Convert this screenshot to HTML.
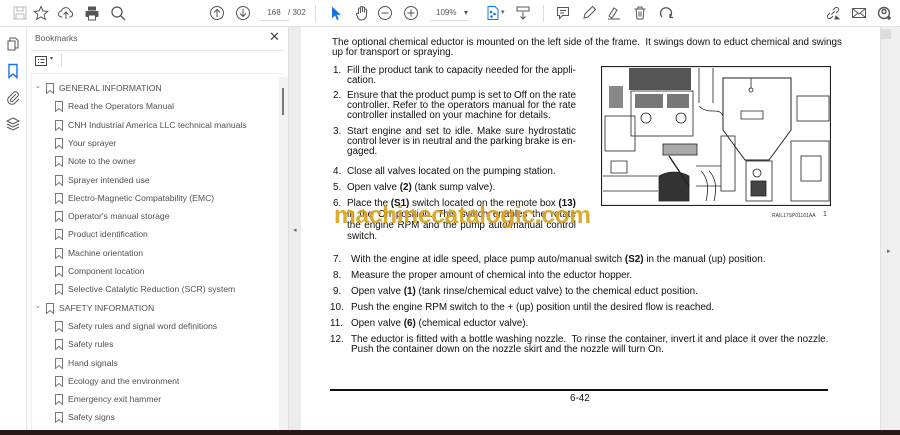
<!DOCTYPE html>
<html><head><meta charset="utf-8"><style>
*{margin:0;padding:0;box-sizing:border-box}
body{width:900px;height:435px;overflow:hidden;background:#fff;font-family:"Liberation Sans",Arial,sans-serif;position:relative}
.a{position:absolute}
.tb{left:0;top:0;width:900px;height:27px;background:#fff;border-bottom:1px solid #e2e2e2}
.ic{position:absolute;top:5px;width:16px;height:16px}
.rail{left:0;top:27px;width:27px;height:403px;background:#fff;border-right:1px solid #e6e6e6}
.panel{left:27px;top:27px;width:261px;height:403px;background:#fff}
.bm{position:absolute;font-size:8.6px;color:#505050;white-space:nowrap}
.gut{left:288px;top:27px;width:13px;height:403px;background:#ececec;border-left:1px solid #ddd}
.page{left:301px;top:27px;width:579px;height:403px;background:#fff}
.vs{left:880px;top:27px;width:20px;height:403px;background:#efefef;border-left:1px solid #e0e0e0}
.t{position:absolute;font-size:9.9px;color:#111;white-space:nowrap;line-height:10px}
.j{display:flex;justify-content:space-between;width:229px}
</style></head><body>
<div class="a tb">
<svg class="ic" style="left:12px" viewBox="0 0 16 16" fill="none" stroke="#bbb"><rect x="2" y="2" width="12" height="12"/><rect x="5" y="2" width="6" height="4"/><rect x="4" y="9" width="8" height="5"/></svg>
<svg class="ic" style="left:33px" viewBox="0 0 16 16" fill="none" stroke="#555"><path d="M8 1.5l2 4.5 4.8.4-3.7 3.2 1.1 4.7L8 11.8l-4.2 2.5 1.1-4.7L1.2 6.4 6 6z"/></svg>
<svg class="ic" style="left:58px" viewBox="0 0 16 16" fill="none" stroke="#555"><path d="M4.5 12H3.5a3 3 0 0 1 0-6 4.5 4.5 0 0 1 8.8 0.5 2.8 2.8 0 0 1 0 5.5h-1M8 14V7M5.5 9.5L8 7l2.5 2.5"/></svg>
<svg class="ic" style="left:84px" viewBox="0 0 16 16" fill="#555"><rect x="4" y="1.5" width="8" height="4"/><rect x="1.5" y="6" width="13" height="6" rx="1"/><rect x="4.5" y="10" width="7" height="5" fill="#fff" stroke="#555"/></svg>
<svg class="ic" style="left:110px" viewBox="0 0 16 16" fill="none" stroke="#555" stroke-width="1.3"><circle cx="7" cy="7" r="5"/><path d="M10.5 10.5L15 15"/></svg>
<svg class="ic" style="left:209px" viewBox="0 0 16 16" fill="none" stroke="#555"><circle cx="8" cy="8" r="6.5"/><path d="M8 12V4.5M5 7.5l3-3 3 3"/></svg>
<svg class="ic" style="left:235px" viewBox="0 0 16 16" fill="none" stroke="#555"><circle cx="8" cy="8" r="6.5"/><path d="M8 4v7.5M5 8.5l3 3 3-3"/></svg>
<div class="a" style="left:259px;top:5px;width:30px;height:16px;font-size:8px;color:#555;text-align:center;line-height:16px;border-bottom:1px solid #ddd">168</div>
<div class="a" style="left:288px;top:5px;font-size:8px;color:#555;line-height:16px">/ 302</div>
<div class="a" style="left:315px;top:5px;width:1px;height:17px;background:#ddd"></div>
<svg class="ic" style="left:328px" viewBox="0 0 16 16"><path d="M4 1.5v12l3-3 2 4.5 1.8-.8-2-4.3h4z" fill="#1473e6"/></svg>
<svg class="ic" style="left:354px" viewBox="0 0 16 16" fill="none" stroke="#555"><path d="M4.5 9V4a1 1 0 0 1 2 0v4M6.5 7V2.5a1 1 0 0 1 2 0V7M8.5 7V3a1 1 0 0 1 2 0v4.5M10.5 7.5V5a1 1 0 0 1 2 0v5a5 5 0 0 1-5 5 4 4 0 0 1-3.5-2L2.5 9.5a1 1 0 0 1 2-.5"/></svg>
<svg class="ic" style="left:377px" viewBox="0 0 16 16" fill="none" stroke="#555"><circle cx="8" cy="8" r="6.5"/><path d="M4.5 8h7"/></svg>
<svg class="ic" style="left:403px" viewBox="0 0 16 16" fill="none" stroke="#555"><circle cx="8" cy="8" r="6.5"/><path d="M4.5 8h7M8 4.5v7"/></svg>
<div class="a" style="left:430px;top:5px;width:40px;height:16px;font-size:8px;color:#555;line-height:16px;padding-left:6px;border-bottom:1px solid #ddd">109%</div>
<div class="a" style="left:464px;top:5px;font-size:8px;color:#555;line-height:16px">▾</div>
<svg class="ic" style="left:485px" viewBox="0 0 16 16" fill="none" stroke="#1473e6"><path d="M3 1.5h7l3 3v10H3z"/><circle cx="6" cy="7" r=".8" fill="#1473e6"/><circle cx="9.5" cy="9" r=".8" fill="#1473e6"/><circle cx="6.5" cy="11.5" r=".8" fill="#1473e6"/></svg>
<div class="a" style="left:501px;top:5px;font-size:7px;color:#555;line-height:16px">▾</div>
<svg class="ic" style="left:515px" viewBox="0 0 16 16" fill="none" stroke="#555"><rect x="2" y="2" width="12" height="4"/><path d="M8 7v7M5.5 11.5L8 14l2.5-2.5"/></svg>
<div class="a" style="left:543px;top:5px;width:1px;height:17px;background:#ddd"></div>
<svg class="ic" style="left:555px" viewBox="0 0 16 16" fill="none" stroke="#555"><path d="M2.5 2.5h11v8h-6l-3 3v-3h-2z"/><path d="M5 5.5h6M5 8h4"/></svg>
<svg class="ic" style="left:581px" viewBox="0 0 16 16" fill="none" stroke="#555"><path d="M3 13l1-4 7.5-7.5 3 3L7 12z"/></svg>
<svg class="ic" style="left:606px" viewBox="0 0 16 16" fill="none" stroke="#555"><path d="M3 11l5-8 3 2-5 8zM2 14h12"/></svg>
<svg class="ic" style="left:632px" viewBox="0 0 16 16" fill="none" stroke="#555"><path d="M2.5 4h11M6 4V2h4v2M4 4l1 10h6l1-10M7 6.5v5M9 6.5v5"/></svg>
<svg class="ic" style="left:658px" viewBox="0 0 16 16" fill="none" stroke="#555" stroke-width="1.3"><path d="M4 12a5.5 5.5 0 1 1 8 0M12 9v3.5h3"/></svg>
<svg class="ic" style="left:825px" viewBox="0 0 16 16" fill="none" stroke="#555"><path d="M6.5 9.5l3-3M5 8l-2 2a2 2 0 0 0 3 3l2-2M11 8l2-2a2 2 0 0 0-3-3L8 5"/><path d="M11 11l3 3h-4z" fill="#555"/></svg>
<svg class="ic" style="left:851px" viewBox="0 0 16 16" fill="none" stroke="#555"><rect x="1.5" y="3.5" width="13" height="9"/><path d="M1.5 3.5L8 9l6.5-5.5M1.5 12.5l5-4M14.5 12.5l-5-4"/></svg>
<svg class="ic" style="left:877px" viewBox="0 0 16 16" fill="none" stroke="#555" stroke-width="1.4"><circle cx="7" cy="8" r="5.5"/><circle cx="7" cy="6.5" r="2"/><path d="M12 11v4M10 13h4"/></svg>
</div>
<div class="a rail">
<svg class="a" style="left:5px;top:9px" width="16" height="16" viewBox="0 0 16 16" fill="none" stroke="#555"><path d="M5 4.5V2h5.5L13 4.5V12H10"/><rect x="3" y="5" width="7" height="9"/></svg>
<svg class="a" style="left:5px;top:36px" width="16" height="16" viewBox="0 0 16 16" fill="none" stroke="#1473e6" stroke-width="1.4"><path d="M4 1.5h8v13L8 11l-4 3.5z"/></svg>
<svg class="a" style="left:5px;top:62px" width="16" height="16" viewBox="0 0 16 16" fill="none" stroke="#555"><path d="M11 5l-5.5 5.5a1.5 1.5 0 0 0 2 2L13 7a3 3 0 0 0-4-4L3.5 8.5a4.3 4.3 0 0 0 6 6L14 10"/></svg>
<svg class="a" style="left:5px;top:89px" width="16" height="16" viewBox="0 0 16 16" fill="none" stroke="#555"><path d="M8 2l6 3-6 3-6-3zM2 8l6 3 6-3M2 11l6 3 6-3"/></svg>
</div>
<div class="a panel">
<div class="a" style="left:8px;top:6px;font-size:8.5px;color:#555">Bookmarks</div>
<div class="a" style="left:242px;top:2px;font-size:13px;color:#444">✕</div>
<div class="a" style="left:4px;top:23px;width:253px;height:1px;background:#e6e6e6"></div>
<svg class="a" style="left:8px;top:29px" width="12" height="10" viewBox="0 0 12 10" fill="none" stroke="#444"><rect x=".5" y=".5" width="11" height="9"/><path d="M3 3.5h1M5.5 3.5h4M3 6.5h1M5.5 6.5h4"/></svg>
<div class="a" style="left:23px;top:28px;font-size:6px;color:#555">▾</div>
<div class="a" style="left:34px;top:26px;width:1px;height:14px;background:#ddd"></div>
<div class="a" style="left:4px;top:46px;width:253px;height:1px;background:#eee"></div>
<div class="a" style="left:252px;top:50px;width:9px;height:353px;background:#f2f2f2"></div>
<div class="a" style="left:255px;top:61px;width:2px;height:27px;background:#777"></div>
<div class="a" style="left:4px;top:46px;width:1px;height:357px;background:#eee"></div>
</div>
<div id="bms"></div>
<div class="a gut"><div class="a" style="left:4px;top:199px;font-size:7px;color:#666">◂</div></div>
<div class="a page"></div>
<div class="a vs"><div class="a" style="left:0;top:2px;width:10px;height:10px;background:#ddd"></div><div class="a" style="left:6px;top:220px;font-size:7px;color:#666">▸</div></div>
<div class="a" style="left:0;top:430px;width:900px;height:5px;background:#2a1818"></div>

<div class="t" style="left:332px;top:38px">The optional chemical eductor is mounted on the left side of the frame.&nbsp; It swings down to educt chemical and swings</div>
<div class="t" style="left:332px;top:48px">up for transport or spraying.</div>

<div class="t" style="left:333px;top:66px">1.</div><div class="t j" style="left:347px;top:66px">Fill the product tank to capacity needed for the appli-</div>
<div class="t" style="left:347px;top:76px">cation.</div>
<div class="t" style="left:333px;top:91px">2.</div><div class="t j" style="left:347px;top:91px">Ensure that the product pump is set to Off on the rate</div>
<div class="t j" style="left:347px;top:101px">controller. Refer to the operators manual for the rate</div>
<div class="t" style="left:347px;top:111px">controller installed on your machine for details.</div>
<div class="t" style="left:333px;top:127px">3.</div><div class="t j" style="left:347px;top:127px">Start engine and set to idle. Make sure hydrostatic</div>
<div class="t j" style="left:347px;top:137px">control lever is in neutral and the parking brake is en-</div>
<div class="t" style="left:347px;top:147px">gaged.</div>
<div class="t" style="left:333px;top:167px">4.</div><div class="t" style="left:347px;top:167px">Close all valves located on the pumping station.</div>
<div class="t" style="left:333px;top:183px">5.</div><div class="t" style="left:347px;top:183px">Open valve <b>(2)</b> (tank sump valve).</div>
<div class="t" style="left:333px;top:199px">6.</div><div class="t j" style="left:347px;top:199px">Place the <b>(S1)</b> switch located on the remote box <b>(13)</b></div>
<div class="t j" style="left:347px;top:210px">in the On position. This switch enables the rotate</div>
<div class="t j" style="left:347px;top:221px">the engine RPM and the pump auto/manual control</div>
<div class="t" style="left:347px;top:232px">switch.</div>
<div class="a" style="left:334px;top:202px;font-size:24.5px;font-weight:bold;color:#d9a21a;opacity:.9;white-space:nowrap;letter-spacing:-0.3px">machinecatalogic.com</div>

<div class="t" style="left:333px;top:255px">7.</div><div class="t" style="left:351px;top:255px">With the engine at idle speed, place pump auto/manual switch <b>(S2)</b> in the manual (up) position.</div>
<div class="t" style="left:333px;top:271px">8.</div><div class="t" style="left:351px;top:271px">Measure the proper amount of chemical into the eductor hopper.</div>
<div class="t" style="left:333px;top:287px">9.</div><div class="t" style="left:351px;top:287px">Open valve <b>(1)</b> (tank rinse/chemical educt valve) to the chemical educt position.</div>
<div class="t" style="left:330px;top:303px">10.</div><div class="t" style="left:351px;top:303px">Push the engine RPM switch to the + (up) position until the desired flow is reached.</div>
<div class="t" style="left:330px;top:319px">11.</div><div class="t" style="left:351px;top:319px">Open valve <b>(6)</b> (chemical eductor valve).</div>
<div class="t" style="left:330px;top:335px">12.</div><div class="t" style="left:351px;top:335px">The eductor is fitted with a bottle washing nozzle.&nbsp; To rinse the container, invert it and place it over the nozzle.</div>
<div class="t" style="left:351px;top:345px">Push the container down on the nozzle skirt and the nozzle will turn On.</div>

<div class="a" style="left:330px;top:389px;width:498px;height:2px;background:#111"></div>
<div class="t" style="left:570px;top:394px">6-42</div>

<svg class="a" style="left:601px;top:66px" width="230" height="140" viewBox="0 0 230 140" fill="none" stroke="#222" stroke-width="0.8">
<rect x=".5" y=".5" width="229" height="139" stroke-width="1.2"/>
<rect x="28" y="2" width="62" height="22" fill="#555" stroke="none"/>
<rect x="30" y="25" width="62" height="45"/>
<rect x="34" y="28" width="28" height="14" fill="#777" stroke="none"/>
<rect x="66" y="28" width="22" height="14" fill="#777" stroke="none"/>
<circle cx="45" cy="52" r="5"/><circle cx="80" cy="52" r="5"/>
<rect x="62" y="78" width="34" height="11" fill="#aaa"/>
<rect x="8" y="20" width="14" height="22" fill="#888" stroke="none"/>
<rect x="4" y="50" width="30" height="35"/>
<path d="M122 12h68v52l-22 30h-24l-22-30z" stroke-width="1"/>
<path d="M150 12v10"/><circle cx="150" cy="24" r="2"/>
<path d="M140 45h22v8h-22z"/>
<rect x="145" y="95" width="26" height="40"/>
<circle cx="156" cy="107" r="4"/>
<rect x="150" y="115" width="15" height="15" fill="#444"/>
<rect x="120" y="70" width="14" height="55"/>
<rect x="196" y="30" width="32" height="25"/>
<rect x="190" y="75" width="38" height="60"/>
<rect x="200" y="90" width="20" height="25"/>
<path d="M98 2v35M112 2v35M98 40c10 10 20 0 24 10"/>
<path d="M58 110q15-8 30 0v25h-30z" fill="#333"/>
<path d="M2 110h55M2 125h55M95 100h25M95 120h25M10 95h16v12H10z"/>
<path d="M68 90l20 30" stroke-width="1.4"/>
<path d="M100 105q10 10 5 30M108 105q10 10 5 30"/>
</svg>
<div class="a" style="left:772px;top:213px;font-size:5px;color:#333">RAIL17SP01161AA</div>
<div class="a" style="left:823px;top:211px;font-size:7px;color:#333">1</div>

<script>
document.querySelectorAll('.j').forEach(function(el){
  var html=el.innerHTML.trim();
  var parts=html.split(/ (?![^<]*>)/);
  el.innerHTML=parts.map(function(p){return '<span>'+p+'</span>';}).join('');
});
var items=[["GENERAL INFORMATION",1],["Read the Operators Manual"],["CNH Industrial America LLC technical manuals"],["Your sprayer"],["Note to the owner"],["Sprayer intended use"],["Electro-Magnetic Compatability (EMC)"],["Operator's manual storage"],["Product identification"],["Machine orientation"],["Component location"],["Selective Catalytic Reduction (SCR) system"],["SAFETY INFORMATION",1],["Safety rules and signal word definitions"],["Safety rules"],["Hand signals"],["Ecology and the environment"],["Emergency exit hammer"],["Safety signs"]];
var h="";items.forEach(function(it,i){var y=82+i*18.3;var top=it[1];var ix=top?46:55;
if(top)h+='<div class="bm" style="left:35px;top:'+(y)+'px;font-size:7px;color:#666">⌄</div>';
h+='<svg class="a" style="left:'+ix+'px;top:'+(y+1)+'px" width="8" height="11" viewBox="0 0 8 11" fill="none" stroke="#777"><path d="M.5 .5h7v10L4 7.5.5 10.5z"/></svg>';
h+='<div class="bm" style="left:'+(ix+13)+'px;top:'+(y+1)+'px">'+it[0]+'</div>';});
document.getElementById("bms").innerHTML=h;
</script>
</body></html>
